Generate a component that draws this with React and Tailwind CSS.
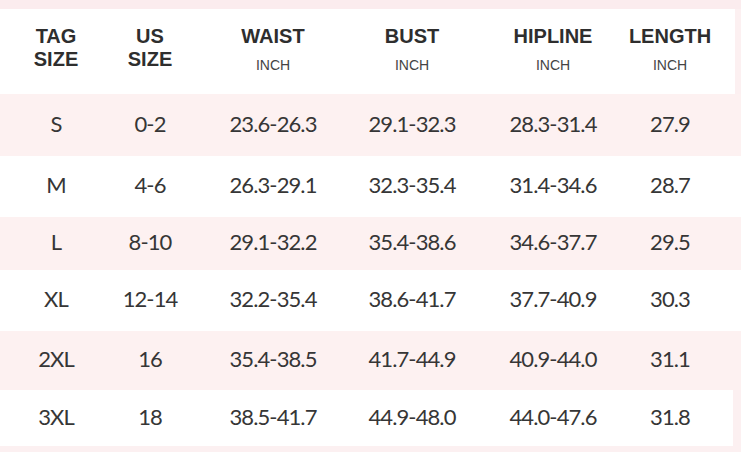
import React from "react";

const widths = ["w-[112px]", "w-[76px]", "w-[170px]", "w-[108px]", "w-[174px]", "w-[60px]"];

const headers = [
  ["TAG", "SIZE"],
  ["US", "SIZE"],
  ["WAIST", null],
  ["BUST", null],
  ["HIPLINE", null],
  ["LENGTH", null],
];

const rows = [
  { cells: ["S", "0-2", "23.6-26.3", "29.1-32.3", "28.3-31.4", "27.9"], h: "h-[62px]", pink: true },
  { cells: ["M", "4-6", "26.3-29.1", "32.3-35.4", "31.4-34.6", "28.7"], h: "h-[61px]", pink: false },
  { cells: ["L", "8-10", "29.1-32.2", "35.4-38.6", "34.6-37.7", "29.5"], h: "h-[53px]", pink: true },
  { cells: ["XL", "12-14", "32.2-35.4", "38.6-41.7", "37.7-40.9", "30.3"], h: "h-[61px]", pink: false },
  { cells: ["2XL", "16", "35.4-38.5", "41.7-44.9", "40.9-44.0", "31.1"], h: "h-[59px]", pink: true },
  { cells: ["3XL", "18", "38.5-41.7", "44.9-48.0", "44.0-47.6", "31.8"], h: "h-[56px]", pink: false },
];

export default function App() {
  return (
    <div className="w-[741px] h-[452px] bg-[#fcf0f1] overflow-hidden">
      {/* top strip */}
      <div className="h-[9px] bg-[#fbecee]" />

      {/* header */}
      <div
        className="h-[85px] mr-[6px] bg-white flex items-start pt-[16px] text-[#2e2e2e]"
        style={{ fontFamily: '"Liberation Sans", Arial, sans-serif' }}
      >
        {headers.map(([a, b], i) => (
          <div key={i} className={`${widths[i]} shrink-0 flex justify-center`}>
            <div className="flex flex-col items-center whitespace-nowrap">
              <span className="text-[20px] leading-[23px] font-bold">{a}</span>
              {b ? (
                <span className="text-[20px] leading-[23px] font-bold">{b}</span>
              ) : (
                <span className="text-[14px] leading-[20px] mt-[7px] text-[#444]">INCH</span>
              )}
            </div>
          </div>
        ))}
      </div>

      {/* rows */}
      {rows.map((r, ri) => (
        <div
          key={ri}
          className={`${r.h} flex items-center pb-[4px] text-[#363636] ${
            r.pink ? "bg-[#fdf1f1]" : ri === rows.length - 1 ? "bg-white mr-[8px]" : "bg-white"
          }`}
          style={{ fontFamily: 'Lato, "Open Sans", sans-serif' }}
        >
          {r.cells.map((c, ci) => (
            <div key={ci} className={`${widths[ci]} shrink-0 flex justify-center`}>
              <span className="text-[22px] tracking-[-0.9px] whitespace-nowrap">{c}</span>
            </div>
          ))}
        </div>
      ))}
    </div>
  );
}
